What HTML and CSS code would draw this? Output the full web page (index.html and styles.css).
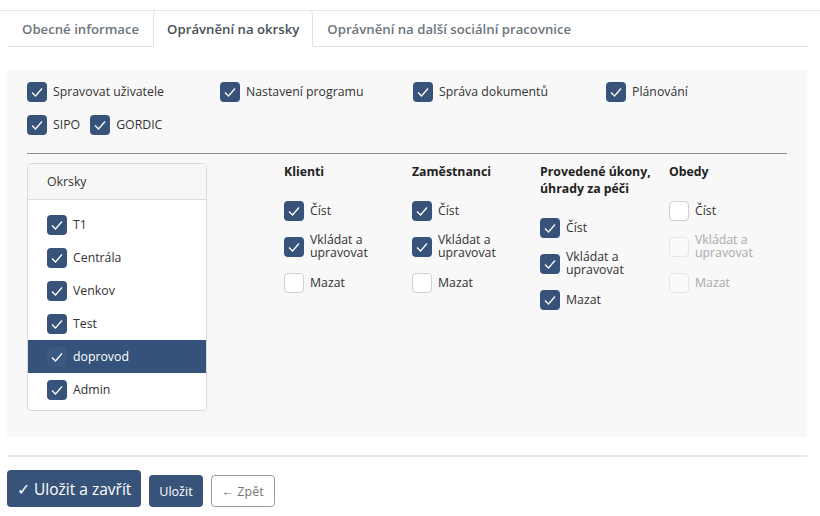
FILE: index.html
```html
<!DOCTYPE html>
<html lang="cs">
<head>
  <meta charset="UTF-8">
  <meta name="viewport" content="width=device-width, initial-scale=1.0">
  <title>Oprávnění uživatele</title>
  <link rel="stylesheet" href="styles.css">
</head>
<body>
  <div class="page">
    <ul class="tabs">
      <li class="tab">Obecné informace</li>
      <li class="tab active">Oprávnění na okrsky</li>
      <li class="tab">Oprávnění na další sociální pracovnice</li>
    </ul>

    <div class="panel">
      <!-- obecná oprávnění -->
      <div class="global-rights">
        <label class="check"><span class="box on"><svg viewBox="0 0 20 20"><polyline points="5,10.5 8.5,14 15,6.5"/></svg></span>Spravovat uživatele</label>
        <label class="check"><span class="box on"><svg viewBox="0 0 20 20"><polyline points="5,10.5 8.5,14 15,6.5"/></svg></span>Nastavení programu</label>
        <label class="check"><span class="box on"><svg viewBox="0 0 20 20"><polyline points="5,10.5 8.5,14 15,6.5"/></svg></span>Správa dokumentů</label>
        <label class="check"><span class="box on"><svg viewBox="0 0 20 20"><polyline points="5,10.5 8.5,14 15,6.5"/></svg></span>Plánování</label>
      </div>
      <div class="extra-rights">
        <label class="check"><span class="box on"><svg viewBox="0 0 20 20"><polyline points="5,10.5 8.5,14 15,6.5"/></svg></span>SIPO</label>
        <label class="check"><span class="box on"><svg viewBox="0 0 20 20"><polyline points="5,10.5 8.5,14 15,6.5"/></svg></span>GORDIC</label>
      </div>

      <hr class="divider">

      <div class="district-area">
        <div class="district-list">
          <div class="list-header">Okrsky</div>
          <ul class="list-items">
            <li><span class="box on"><svg viewBox="0 0 20 20"><polyline points="5,10.5 8.5,14 15,6.5"/></svg></span>T1</li>
            <li><span class="box on"><svg viewBox="0 0 20 20"><polyline points="5,10.5 8.5,14 15,6.5"/></svg></span>Centrála</li>
            <li><span class="box on"><svg viewBox="0 0 20 20"><polyline points="5,10.5 8.5,14 15,6.5"/></svg></span>Venkov</li>
            <li><span class="box on"><svg viewBox="0 0 20 20"><polyline points="5,10.5 8.5,14 15,6.5"/></svg></span>Test</li>
            <li class="selected"><span class="box on"><svg viewBox="0 0 20 20"><polyline points="5,10.5 8.5,14 15,6.5"/></svg></span>doprovod</li>
            <li><span class="box on"><svg viewBox="0 0 20 20"><polyline points="5,10.5 8.5,14 15,6.5"/></svg></span>Admin</li>
          </ul>
        </div>

        <div class="rights-columns">
          <div class="rights-col">
            <h4>Klienti</h4>
            <label class="check"><span class="box on"><svg viewBox="0 0 20 20"><polyline points="5,10.5 8.5,14 15,6.5"/></svg></span>Číst</label>
            <label class="check"><span class="box on"><svg viewBox="0 0 20 20"><polyline points="5,10.5 8.5,14 15,6.5"/></svg></span>Vkládat a upravovat</label>
            <label class="check"><span class="box"></span>Mazat</label>
          </div>
          <div class="rights-col">
            <h4>Zaměstnanci</h4>
            <label class="check"><span class="box on"><svg viewBox="0 0 20 20"><polyline points="5,10.5 8.5,14 15,6.5"/></svg></span>Číst</label>
            <label class="check"><span class="box on"><svg viewBox="0 0 20 20"><polyline points="5,10.5 8.5,14 15,6.5"/></svg></span>Vkládat a upravovat</label>
            <label class="check"><span class="box"></span>Mazat</label>
          </div>
          <div class="rights-col">
            <h4>Provedené úkony, úhrady za péči</h4>
            <label class="check"><span class="box on"><svg viewBox="0 0 20 20"><polyline points="5,10.5 8.5,14 15,6.5"/></svg></span>Číst</label>
            <label class="check"><span class="box on"><svg viewBox="0 0 20 20"><polyline points="5,10.5 8.5,14 15,6.5"/></svg></span>Vkládat a upravovat</label>
            <label class="check"><span class="box on"><svg viewBox="0 0 20 20"><polyline points="5,10.5 8.5,14 15,6.5"/></svg></span>Mazat</label>
          </div>
          <div class="rights-col">
            <h4>Obedy</h4>
            <label class="check"><span class="box"></span>Číst</label>
            <label class="check disabled"><span class="box"></span>Vkládat a upravovat</label>
            <label class="check disabled"><span class="box"></span>Mazat</label>
          </div>
        </div>
      </div>
    </div>

    <div class="actions">
      <button class="btn btn-primary btn-lg">✓ Uložit a zavřít</button>
      <button class="btn btn-primary">Uložit</button>
      <button class="btn btn-outline">← Zpět</button>
    </div>
  </div>
</body>
</html>
```

FILE: styles.css
```css
body {
  margin: 0;
  padding: 0;
  font-family: 'Open Sans', 'Noto Sans', sans-serif;
  font-size: 12.3px;
  color: #333;
  background-color: #ffffff;
}

.page {
  margin-top: 10px;
  border-top: 1px solid #e6e6e6;
}

/* záložky */
.tabs {
  display: flex;
  list-style: none;
  margin: 0 12px 0 8px;
  padding: 0;
  border-bottom: 1px solid #dee2e6;
}

.tab {
  height: 34px;
  line-height: 34px;
  padding: 1px 13px 0 13px;
  margin-bottom: -1px;
  border: 1px solid transparent;
  border-top: none;
  border-radius: 4px 4px 0 0;
  font-weight: 600;
  font-size: 13.2px;
  color: #6c757d;
}

.tab.active {
  color: #495057;
  background-color: #fff;
  border-color: #dee2e6;
  border-bottom-color: #fff;
}

/* panel */
.panel {
  margin: 22px 13px 0 7px;
  padding: 13px 20px 26px 20px;
  background-color: #f8f8f8;
}

.check {
  display: flex;
  align-items: center;
  gap: 6px;
  line-height: 1.05;
}

.box {
  flex: none;
  width: 20px;
  height: 20px;
  box-sizing: border-box;
  border: 1px solid #cfcfcf;
  border-radius: 4px;
  background-color: #fff;
}

.box.on {
  border: none;
  background-color: #37537a;
}

.box svg {
  display: block;
  width: 20px;
  height: 20px;
}

.box svg polyline {
  fill: none;
  stroke: #fff;
  stroke-width: 1.3;
}

.global-rights {
  display: grid;
  grid-template-columns: repeat(4, 193px);
  height: 20px;
}

.extra-rights {
  display: flex;
  gap: 10px;
  margin-top: 13px;
}

.divider {
  margin: 18px 0 9px 0;
  border: none;
  border-top: 1px solid #8f8f8f;
}

/* okrsky */
.district-area {
  display: flex;
  align-items: flex-start;
}

.district-list {
  flex: none;
  width: 180px;
  box-sizing: border-box;
  border: 1px solid #d9d9d9;
  border-radius: 4px;
  background-color: #fff;
  overflow: hidden;
}

.list-header {
  height: 35px;
  line-height: 35px;
  padding-left: 19px;
  background-color: #f7f7f7;
  border-bottom: 1px solid #dcdcdc;
}

.list-items {
  list-style: none;
  margin: 0;
  padding: 8px 0 4px 0;
}

.list-items li {
  display: flex;
  align-items: center;
  gap: 6px;
  height: 33px;
  padding-left: 19px;
}

.list-items li.selected {
  background-color: #34527a;
  color: #fff;
}

.list-items li.selected .box {
  background-color: #3b5980;
}

/* práva */
.rights-columns {
  flex: 1;
  display: grid;
  grid-template-columns: 128px 128px 129px 1fr;
  margin-left: 77px;
}

.rights-col h4 {
  margin: 0 0 13px 0;
  font-size: 12.3px;
  font-weight: 700;
  color: #222;
  line-height: 17px;
  padding-right: 10px;
}

.rights-col .check {
  height: 36px;
  padding-right: 10px;
}

.check.disabled {
  color: #aaa;
}

.check.disabled .box {
  border-color: #e6e6e6;
  background-color: #fafafa;
}

/* tlačítka */
.actions {
  margin: 18px 13px 0 7px;
  padding-top: 13px;
  border-top: 2px solid #e3eaf2;
  display: flex;
  align-items: flex-end;
  gap: 8px;
}

.btn {
  height: 32px;
  padding: 0 10px;
  border-radius: 4px;
  font-family: inherit;
  font-size: 12.5px;
  cursor: pointer;
}

.btn-primary {
  background-color: #37537a;
  border: none;
  color: #fff;
}

.btn-lg {
  height: 37px;
  padding: 0 10px;
  font-size: 15.5px;
}

.btn-outline {
  background-color: #fff;
  border: 1px solid #999;
  color: #777;
}
```
